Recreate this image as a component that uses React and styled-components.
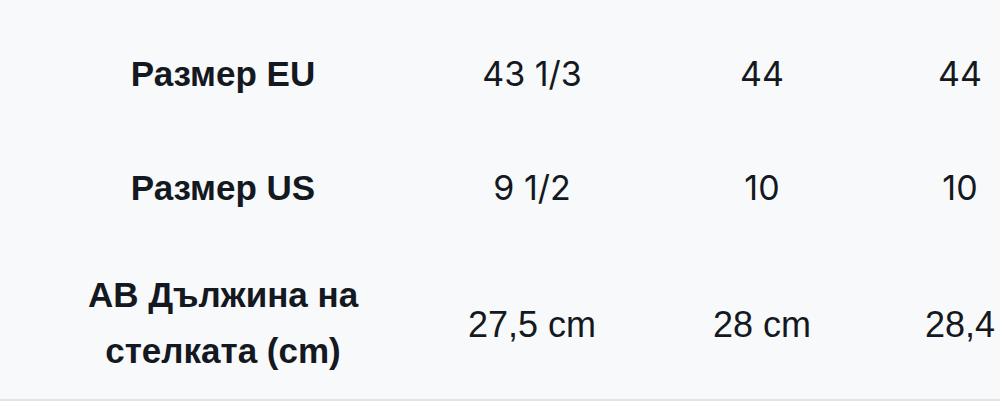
import React from "react";
import styled, { createGlobalStyle } from "styled-components";

const Global = createGlobalStyle`
  html, body { margin: 0; padding: 0; background: #f8f9fb; }
  body { overflow: hidden; }
`;

const Page = styled.div`
  width: 1000px;
  height: 401px;
  box-sizing: border-box;
  padding-top: 17px;
  background: #f8f9fb;
  overflow: hidden;
  border-bottom: 2px solid #e1e3e7;
`;

const Table = styled.div`
  display: flex;
  flex-direction: column;
  width: 1040px;
`;

const Row = styled.div`
  display: grid;
  grid-template-columns: 446px 172px 288px 108px;
  align-items: center;
  padding: 22px 0;
`;

const Cell = styled.div`
  min-height: 70px;
  display: flex;
  align-items: center;
  justify-content: ${(p) => (p.$start ? "flex-start" : "center")};
  padding-left: ${(p) => (p.$start ? "19px" : "0")};
  white-space: nowrap;
  color: #141820;
`;

const Label = styled(Cell)`
  font-family: "Liberation Sans", Arial, sans-serif;
  font-weight: 700;
  font-size: 35px;
  line-height: 56px;
  text-align: center;
  white-space: normal;
`;

const LabelText = styled.span`
  display: block;
  width: 300px;
  text-align: center;
`;

const Value = styled(Cell)`
  font-family: ${(p) =>
    p.$plain ? '"Liberation Sans", Arial, sans-serif' : 'Inter, "Liberation Sans", sans-serif'};
  font-weight: 400;
  font-size: ${(p) => (p.$plain ? "36px" : "34px")};
  line-height: 56px;
  padding-top: ${(p) => (p.$plain ? "4px" : "0")};
  box-sizing: border-box;
`;

const rows = [
  { label: "Размер EU", values: ["43 1/3", "44", "44"] },
  { label: "Размер US", values: ["9 1/2", "10", "10"] },
  { label: "АВ Дължина на стелката (cm)", values: ["27,5 cm", "28 cm", "28,4 cm"], plain: true },
];

export default function App() {
  return (
    <>
      <Global />
      <Page>
        <Table>
          {rows.map((r) => (
            <Row key={r.label}>
              <Label>
                <LabelText>{r.label}</LabelText>
              </Label>
              {r.values.map((v, i) => (
                <Value key={i} $plain={r.plain} $start={r.plain && i === 2}>
                  {v}
                </Value>
              ))}
            </Row>
          ))}
        </Table>
      </Page>
    </>
  );
}
